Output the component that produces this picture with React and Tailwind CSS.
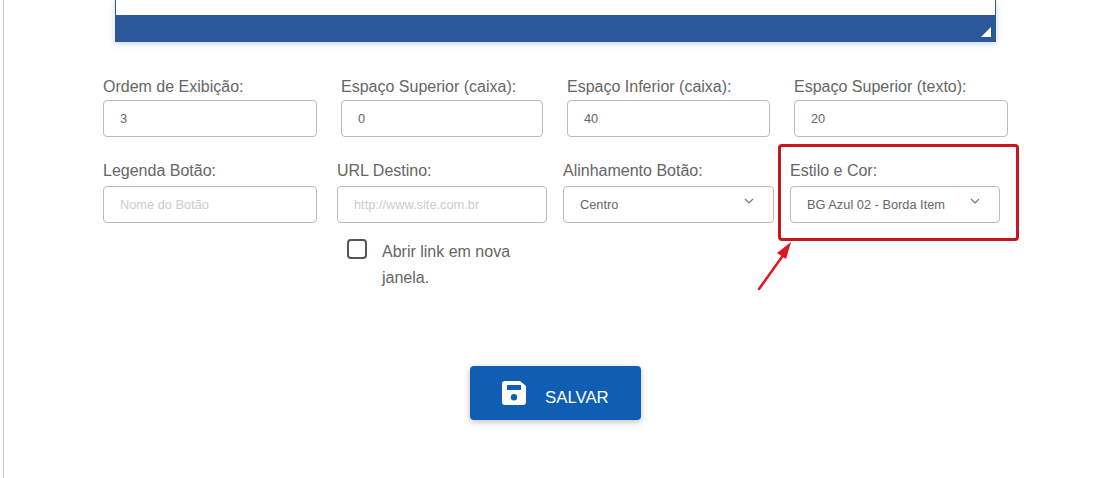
import React from "react";

const Field = ({ label, labelClass, width, value, placeholder, className = "" }) => (
  <div className={`shrink-0 ${className}`} style={{ width }}>
    <label className={`block text-base leading-[22px] text-[#666] ${labelClass}`}>{label}</label>
    <input
      readOnly
      value={value || ""}
      placeholder={placeholder}
      className="block h-[37px] w-full rounded border border-[#bbb] bg-white pl-4 text-[12.8px] text-[#666] outline-none placeholder:text-[#ccc]"
    />
  </div>
);

const SelectField = ({ label, width, value, chevronRight }) => (
  <div className="shrink-0" style={{ width }}>
    <label className="block h-[26px] text-base leading-[22px] text-[#666]">{label}</label>
    <div className="relative flex h-[37px] items-center rounded border border-[#bbb] bg-white pl-4 text-[12.8px] text-[#666]">
      {value}
      <svg
        className="absolute top-[11px]"
        style={{ right: chevronRight }}
        width="10"
        height="7"
        viewBox="0 0 10 7"
        fill="none"
        stroke="#777"
        strokeWidth="1.2"
      >
        <path d="M1 1l4 4 4-4" />
      </svg>
    </div>
  </div>
);

const SaveIcon = () => (
  <svg width="24" height="24" viewBox="0 0 24 24" className="shrink-0">
    <path
      fillRule="evenodd"
      fill="#fff"
      d="M3 0h15l6 5v16a3 3 0 0 1-3 3H3a3 3 0 0 1-3-3V3a3 3 0 0 1 3-3zM5 4v5h14V4zM12 13a3.2 3.2 0 1 0 0 6.400a3.2 3.2 0 0 0 0-6.400z"
    />
  </svg>
);

export default function App() {
  return (
    <div className="relative h-[478px] overflow-hidden bg-white font-['Liberation_Sans',Arial,sans-serif]">
      <div className="ml-[3px] h-full border-l border-[#ccc]">
        {/* editor box cut off at the top */}
        <div className="ml-[111px] w-[881px] shadow-[0_2px_6px_rgba(44,88,153,0.25)]">
          <div className="h-[15px] border-x border-[#2c5899] bg-white" />
          <div className="relative h-[27px] bg-[#2c5899]">
            <svg className="absolute bottom-[5px] right-[5px]" width="10" height="10" viewBox="0 0 10 10">
              <path d="M10 0v10H0z" fill="#fff" />
            </svg>
          </div>
        </div>

        <div className="ml-[99px] mt-[34px] flex gap-6">
          <Field label="Ordem de Exibição:" labelClass="h-6" width={214} value="3" />
          <Field label="Espaço Superior (caixa):" labelClass="h-6" width={202} value="0" />
          <Field label="Espaço Inferior (caixa):" labelClass="h-6" width={203} value="40" />
          <Field label="Espaço Superior (texto):" labelClass="h-6" width={214} value="20" />
        </div>

        <div className="ml-[99px] mt-[23px] flex gap-4">
          <Field label="Legenda Botão:" labelClass="h-[26px]" width={214} placeholder="Nome do Botão" />
          <Field label="URL Destino:" labelClass="h-[26px]" className="ml-1" width={210} placeholder="http://www.site.com.br" />
          <SelectField label="Alinhamento Botão:" width={211} value="Centro" chevronRight={19} />
          <SelectField label="Estilo e Cor:" width={210} value="BG Azul 02 - Borda Item" chevronRight={19} />
        </div>

        <div className="ml-[343px] mt-4 flex w-[200px] items-start gap-[15px]">
          <div className="h-5 w-5 shrink-0 rounded-sm border-2 border-[#555]" />
          <span className="w-[150px] text-base leading-[26px] text-[#666]">
            Abrir link em nova janela.
          </span>
        </div>

        <div className="mt-[75px] flex justify-center">
          <button className="flex h-[54px] w-[171px] items-center rounded-sm bg-[#0f5eb3] pl-8 text-[16.8px] text-white shadow-[0_2px_6px_rgba(0,0,0,0.25)]">
            <SaveIcon />
            <span className="ml-[19px] mt-[10px]">SALVAR</span>
          </button>
        </div>
      </div>

      {/* annotation over the page */}
      <div className="absolute left-[778px] top-[144px] h-[97px] w-[241px] rounded-sm border-[3px] border-[#c8161d]" />
      <svg className="absolute left-[750px] top-[236px]" width="50" height="60" viewBox="0 0 50 60">
        <path d="M9 53L34 18" stroke="#e0161e" strokeWidth="2.500" strokeLinecap="round" />
        <path d="M41 6L27 17l9 6z" fill="#e0161e" />
      </svg>
    </div>
  );
}
